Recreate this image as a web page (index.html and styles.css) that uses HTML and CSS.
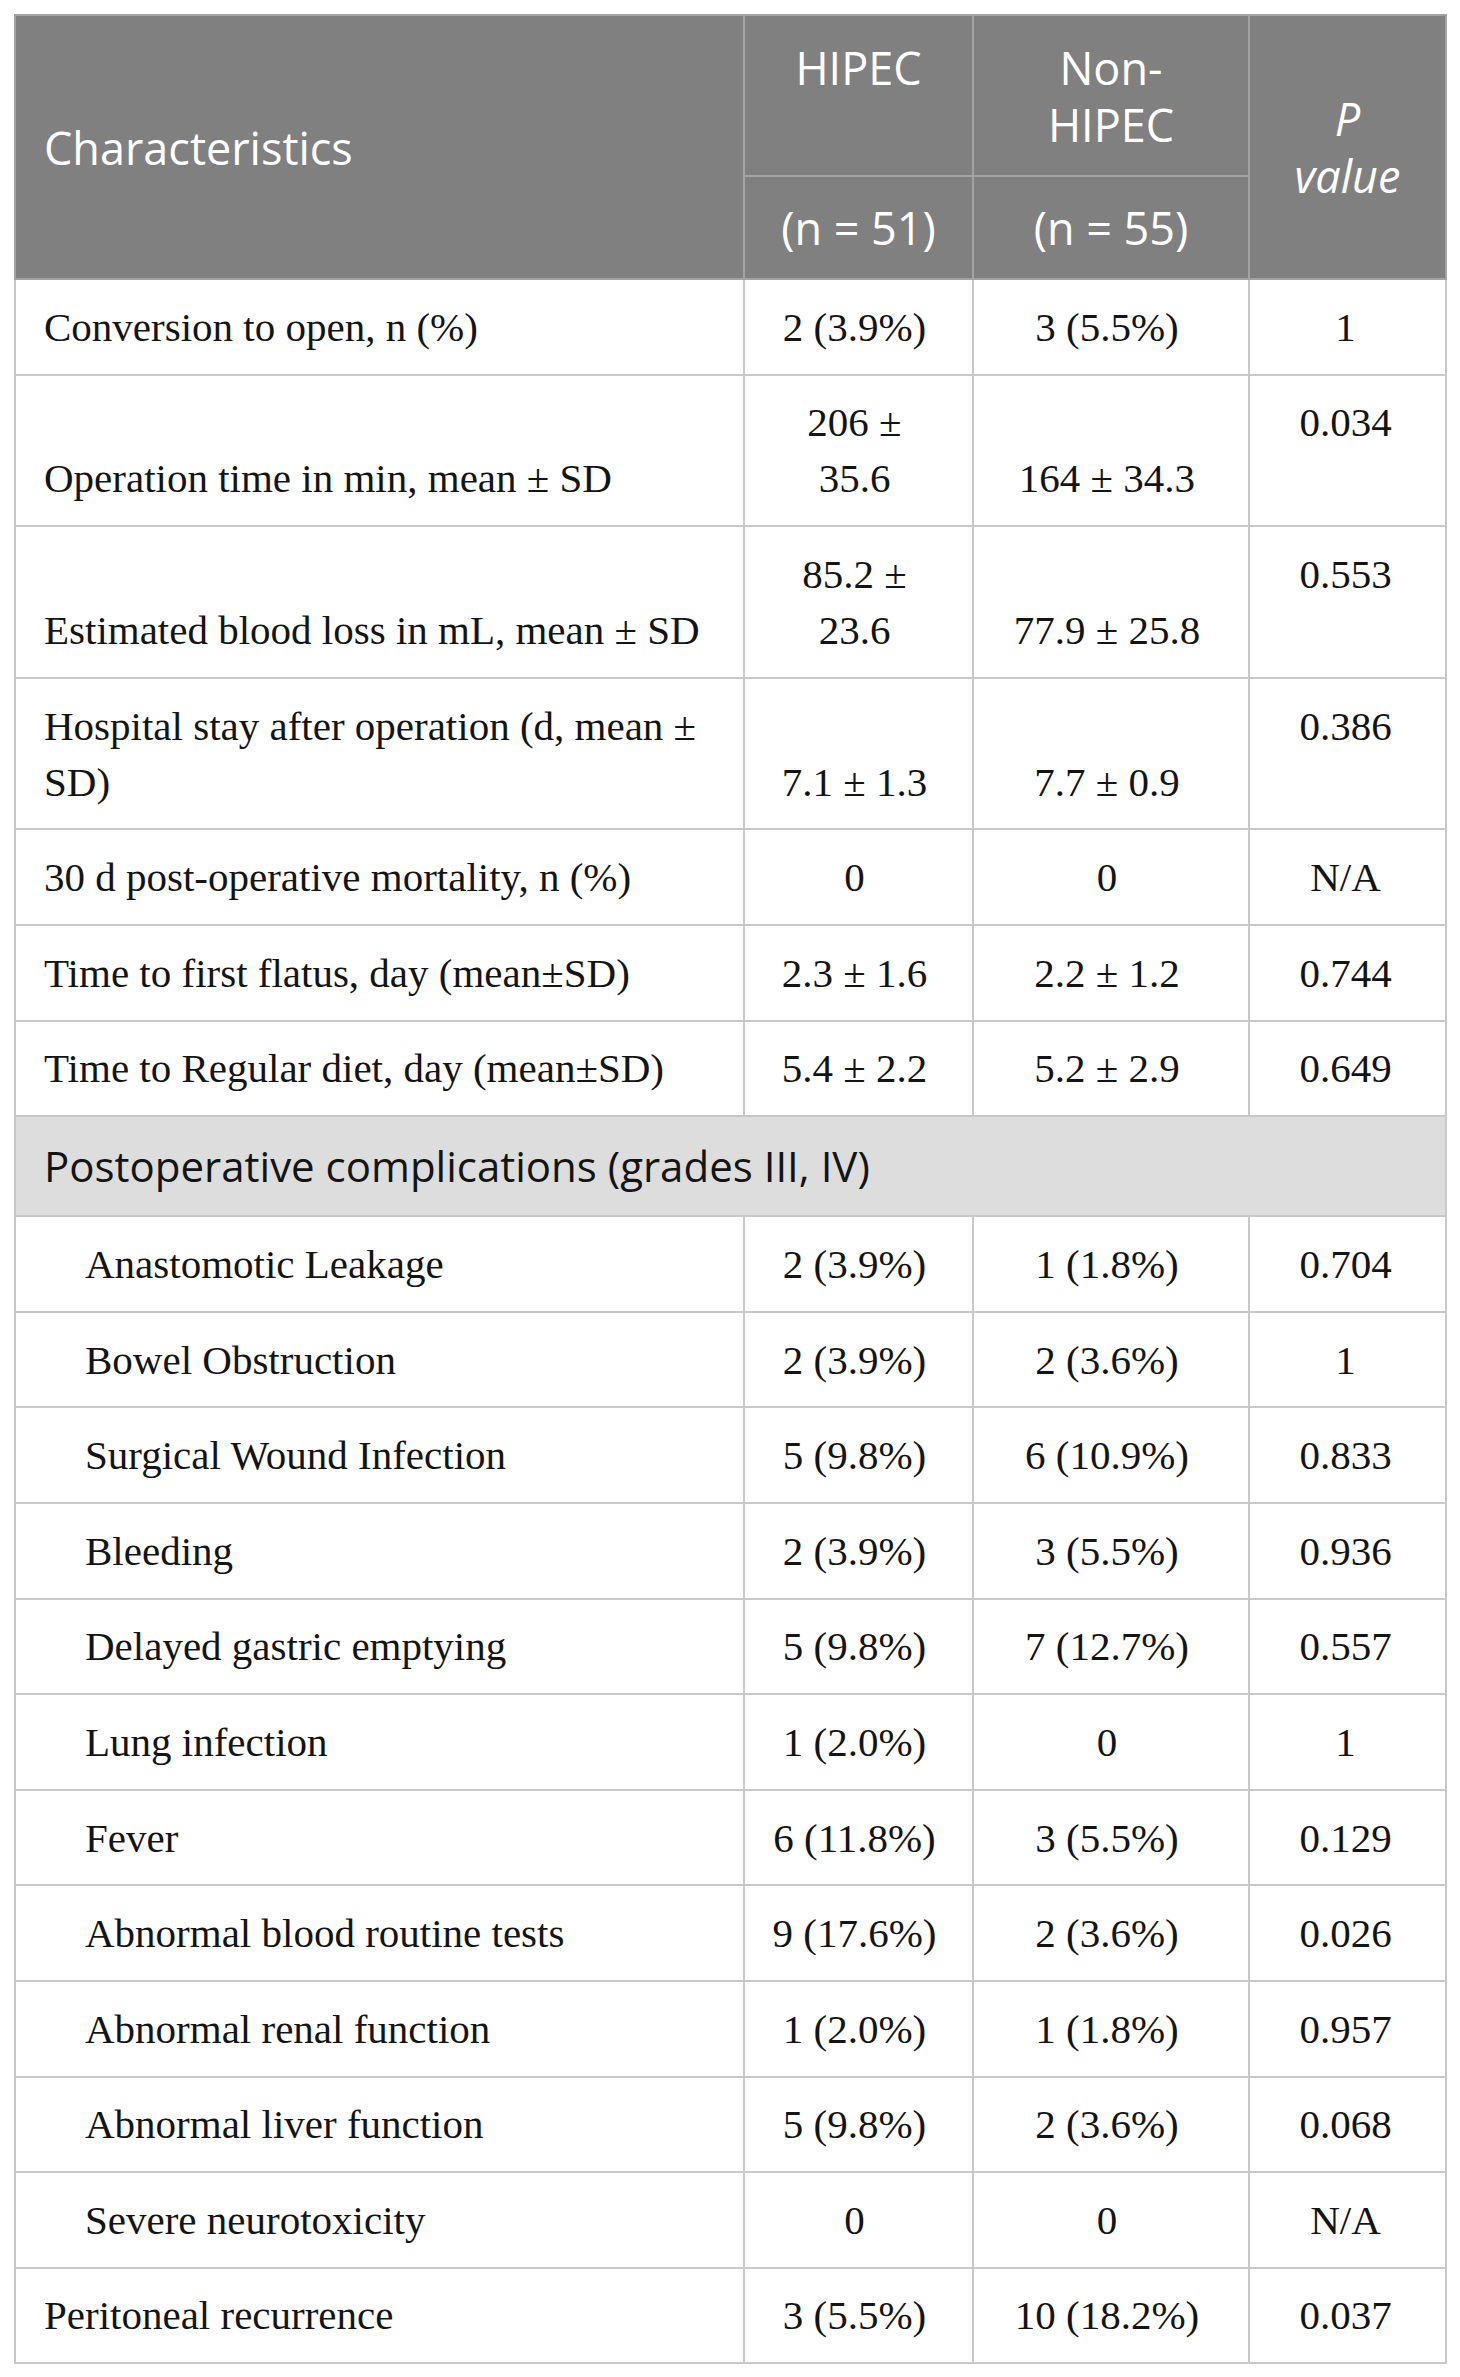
FILE: index.html
```html
<!DOCTYPE html>
<html lang="en">
<head>
<meta charset="utf-8">
<title>Table</title>
<link rel="stylesheet" href="styles.css">
</head>
<body>
<div class="page">
<table class="data">
  <colgroup>
    <col class="c1"><col class="c2"><col class="c3"><col class="c4">
  </colgroup>
  <thead>
    <tr class="h1">
      <th rowspan="2" class="hl">Characteristics</th>
      <th class="ht">HIPEC</th>
      <th class="ht">Non-<br>HIPEC</th>
      <th rowspan="2" class="hp"><i>P<br>value</i></th>
    </tr>
    <tr class="h2">
      <th class="hn">(n = 51)</th>
      <th class="hn">(n = 55)</th>
    </tr>
  </thead>
  <tbody>
    <tr><td class="lab">Conversion to open, n (%)</td><td>2 (3.9%)</td><td>3 (5.5%)</td><td class="pv">1</td></tr>
    <tr><td class="lab">Operation time in min, mean ± SD</td><td>206 ±<br>35.6</td><td>164 ± 34.3</td><td class="pv">0.034</td></tr>
    <tr><td class="lab">Estimated blood loss in mL, mean ± SD</td><td>85.2 ±<br>23.6</td><td>77.9 ± 25.8</td><td class="pv">0.553</td></tr>
    <tr><td class="lab">Hospital stay after operation (d, mean ±<br>SD)</td><td>7.1 ± 1.3</td><td>7.7 ± 0.9</td><td class="pv">0.386</td></tr>
    <tr><td class="lab">30 d post-operative mortality, n (%)</td><td>0</td><td>0</td><td class="pv">N/A</td></tr>
    <tr><td class="lab">Time to first flatus, day (mean±SD)</td><td>2.3 ± 1.6</td><td>2.2 ± 1.2</td><td class="pv">0.744</td></tr>
    <tr><td class="lab">Time to Regular diet, day (mean±SD)</td><td>5.4 ± 2.2</td><td>5.2 ± 2.9</td><td class="pv">0.649</td></tr>
    <tr class="section"><td colspan="4">Postoperative complications (grades III, IV)</td></tr>
    <tr><td class="lab ind">Anastomotic Leakage</td><td>2 (3.9%)</td><td>1 (1.8%)</td><td class="pv">0.704</td></tr>
    <tr><td class="lab ind">Bowel Obstruction</td><td>2 (3.9%)</td><td>2 (3.6%)</td><td class="pv">1</td></tr>
    <tr><td class="lab ind">Surgical Wound Infection</td><td>5 (9.8%)</td><td>6 (10.9%)</td><td class="pv">0.833</td></tr>
    <tr><td class="lab ind">Bleeding</td><td>2 (3.9%)</td><td>3 (5.5%)</td><td class="pv">0.936</td></tr>
    <tr><td class="lab ind">Delayed gastric emptying</td><td>5 (9.8%)</td><td>7 (12.7%)</td><td class="pv">0.557</td></tr>
    <tr><td class="lab ind">Lung infection</td><td>1 (2.0%)</td><td>0</td><td class="pv">1</td></tr>
    <tr><td class="lab ind">Fever</td><td>6 (11.8%)</td><td>3 (5.5%)</td><td class="pv">0.129</td></tr>
    <tr><td class="lab ind">Abnormal blood routine tests</td><td>9 (17.6%)</td><td>2 (3.6%)</td><td class="pv">0.026</td></tr>
    <tr><td class="lab ind">Abnormal renal function</td><td>1 (2.0%)</td><td>1 (1.8%)</td><td class="pv">0.957</td></tr>
    <tr><td class="lab ind">Abnormal liver function</td><td>5 (9.8%)</td><td>2 (3.6%)</td><td class="pv">0.068</td></tr>
    <tr><td class="lab ind">Severe neurotoxicity</td><td>0</td><td>0</td><td class="pv">N/A</td></tr>
    <tr><td class="lab">Peritoneal recurrence</td><td>3 (5.5%)</td><td>10 (18.2%)</td><td class="pv">0.037</td></tr>
  </tbody>
</table>
</div>
</body>
</html>
```

FILE: styles.css
```css
html, body {
  margin: 0;
  padding: 0;
  background: #ffffff;
}

.page {
  padding: 14px 15px 15px 14px;
}

.data {
  width: 1431px;
  table-layout: fixed;
  border-collapse: collapse;
  font-family: "Liberation Serif", "Times New Roman", serif;
  font-size: 41px;
  line-height: 56px;
  color: #141414;
  border: 2px solid #c9c9c9;
}

.c1 { width: 729px; }
.c2 { width: 229px; }
.c3 { width: 276px; }
.c4 { width: 197px; }

.data thead th {
  background: #808080;
  color: #ffffff;
  font-family: "Open Sans", "Noto Sans", sans-serif;
  font-weight: normal;
  font-size: 45px;
  line-height: 57px;
  border: 2px solid #a3a3a3;
  text-align: center;
  padding: 22px 10px;
}

.data thead .h1 { height: 160px; }
.data thead .h2 { height: 100px; }

.data thead th.hl {
  text-align: left;
  vertical-align: middle;
  padding-left: 28px;
}

.data thead th.ht {
  vertical-align: top;
  padding-top: 23px;
}

.data thead th.hn {
  vertical-align: middle;
}

.data thead th.hp {
  vertical-align: middle;
}

.data thead th.hp i {
  font-style: italic;
}

.data tbody td {
  border: 2px solid #c9c9c9;
  padding: 18.8px 30px 18.8px 22px;
  text-align: center;
  vertical-align: bottom;
}

.data tbody td.lab {
  text-align: left;
  padding-left: 28px;
  padding-right: 24px;
}

.data tbody td.ind {
  padding-left: 69px;
}

.data tbody td.pv {
  vertical-align: top;
  padding-left: 24px;
  padding-right: 28px;
}

.data tbody tr.section td {
  background: #dddddd;
  font-family: "Open Sans", "Noto Sans", sans-serif;
  font-size: 42px;
  line-height: 57px;
  text-align: left;
  padding: 20px 28px 21px 28px;
  color: #141414;
  vertical-align: middle;
}
```
